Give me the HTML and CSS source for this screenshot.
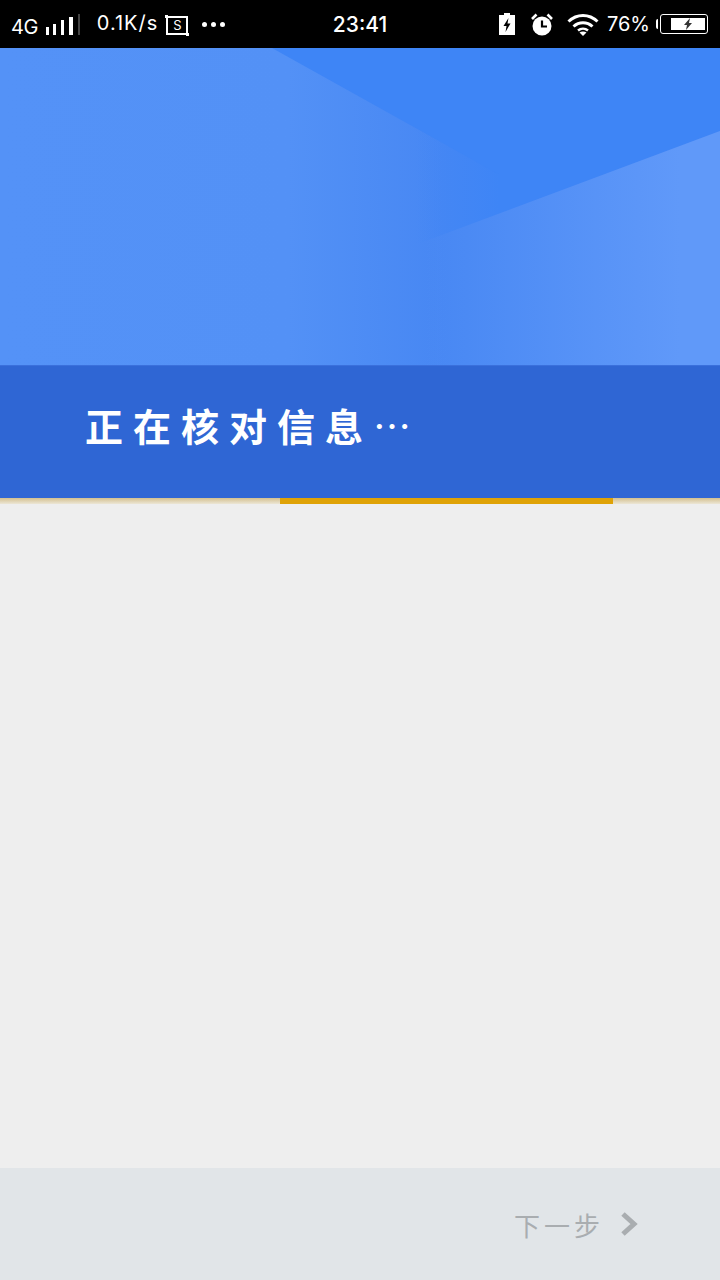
FILE: index.html
```html
<!DOCTYPE html>
<html lang="zh-CN">
<head>
    <meta charset="UTF-8">
    <meta name="viewport" content="width=device-width, initial-scale=1.0">
    <title>正在核对信息</title>
    <link rel="stylesheet" href="styles.css">
</head>
<body>
    <div class="page">
        <div class="status-bar">
            <div class="status-left">
                <span class="net-type">4G</span>
                <svg class="signal" width="36" height="22" viewBox="0 0 36 22">
                    <rect x="1" y="13" width="3" height="8" fill="#fff"/>
                    <rect x="8" y="10" width="3" height="11" fill="#fff"/>
                    <rect x="16" y="6" width="3" height="15" fill="#fff"/>
                    <rect x="24" y="3" width="4" height="18" fill="#fff"/>
                    <rect x="33" y="0" width="2" height="21" fill="#444"/>
                </svg>
                <span class="net-speed">0.1K/s</span>
                <div class="shot-icon">
                    <span>S</span>
                </div>
                <div class="more-dots">
                    <i></i><i></i><i></i>
                </div>
            </div>
            <div class="clock">23:41</div>
            <div class="status-right">
                <svg width="16" height="22" viewBox="0 0 16 22">
                    <path d="M5 0h6v2h5v20H0V2h5z" fill="#fff"/>
                    <path d="M9.500 5 4.500 13h3l-1 6 5-8.500h-3z" fill="#000"/>
                </svg>
                <svg class="alarm" width="22" height="23" viewBox="0 0 22 23">
                    <circle cx="11" cy="13" r="9.500" fill="#fff"/>
                    <path d="M11 7.500v6h5" fill="none" stroke="#000" stroke-width="2.200"/>
                    <path d="M1 6 5.500 1.500M21 6l-4.500-4.500" stroke="#fff" stroke-width="2.600" fill="none"/>
                </svg>
                <svg class="wifi" width="32" height="24" viewBox="0 0 32 24">
                    <path d="M1.500 9.500C10 1.500 22 1.500 30.500 9.500" fill="none" stroke="#fff" stroke-width="3"/>
                    <path d="M6.500 14.500C12 9.500 20 9.500 25.500 14.500" fill="none" stroke="#fff" stroke-width="3"/>
                    <path d="M11 18.500c3-2.500 7-2.500 10 0" fill="none" stroke="#fff" stroke-width="2.500"/>
                    <path d="M12.500 20.500 16 24l3.500-3.500c-2-1.500-5-1.500-7 0z" fill="#fff"/>
                </svg>
                <span class="battery-level">76%</span>
                <div class="battery">
                    <div class="battery-nub"></div>
                    <div class="battery-body">
                        <div class="battery-fill">
                            <svg width="10" height="12" viewBox="0 0 10 12">
                                <path d="M7 0 1 7h3l-1 5 6-7H6z" fill="#333"/>
                            </svg>
                        </div>
                    </div>
                </div>
            </div>
        </div>

        <div class="hero">
            <svg class="hero-bg" width="720" height="317" viewBox="0 0 720 317">
                <defs>
                    <linearGradient id="baseFill" x1="0" y1="0" x2="1" y2="0">
                        <stop offset="0" stop-color="#5492f7"/>
                        <stop offset="0.4" stop-color="#5391f6"/>
                        <stop offset="0.62" stop-color="#4787f3"/>
                        <stop offset="1" stop-color="#4787f3"/>
                    </linearGradient>
                    <linearGradient id="darkFill" gradientUnits="userSpaceOnUse" x1="415" y1="0" x2="500" y2="0">
                        <stop offset="0" stop-color="#3e85f6" stop-opacity="0"/>
                        <stop offset="1" stop-color="#3e85f6"/>
                    </linearGradient>
                    <linearGradient id="lightFill" gradientUnits="userSpaceOnUse" x1="425" y1="0" x2="680" y2="0">
                        <stop offset="0" stop-color="#6099f9" stop-opacity="0"/>
                        <stop offset="1" stop-color="#6099f9"/>
                    </linearGradient>
                </defs>
                <rect width="720" height="317" fill="url(#baseFill)"/>
                <polygon points="415,0 720,0 720,83 415,197" fill="url(#darkFill)"/>
                <polygon points="272,0 500,0 500,127" fill="#3e85f6"/>
                <polygon points="720,83 720,317 385,317 415,197" fill="url(#lightFill)"/>
            </svg>
        </div>

        <div class="notice">
            <h1 class="notice-title">正在核对信息<span class="notice-dots">…</span></h1>
        </div>

        <div class="progress">
            <div class="progress-done"></div>
            <div class="progress-now"></div>
            <div class="progress-rest"></div>
        </div>

        <div class="content"></div>

        <div class="footer">
            <span class="next-label">下一步</span>
            <svg class="next-arrow" width="18" height="24" viewBox="0 0 18 24">
                <path d="M3 2 14 12 3 22" fill="none" stroke="#a9adb0" stroke-width="5"/>
            </svg>
        </div>
    </div>
</body>
</html>
```

FILE: styles.css
```css
* {
    box-sizing: border-box;
    margin: 0;
    padding: 0;
}

body, html {
    width: 720px;
    height: 1280px;
    overflow: hidden;
    background-color: #eeeeee;
    font-family: "Noto Sans CJK SC", "Noto Sans", sans-serif;
}

.page {
    width: 720px;
    height: 1280px;
    display: flex;
    flex-direction: column;
}

/* 状态栏 */
.status-bar {
    height: 48px;
    flex: none;
    display: grid;
    grid-template-columns: 1fr auto 1fr;
    align-items: center;
    padding: 0 12px;
    background-color: #000;
    color: #fff;
    font-family: Inter, "Liberation Sans", sans-serif;
}

.status-left {
    display: flex;
    align-items: center;
}

.net-type {
    font-size: 20px;
    letter-spacing: -0.5px;
    margin-top: 6px;
    margin-left: -1px;
}

.signal {
    margin-left: 7px;
    margin-top: 2px;
}

.net-speed {
    font-size: 20px;
    letter-spacing: 1px;
    margin-left: 16px;
    margin-top: -3px;
}

.shot-icon {
    position: relative;
    width: 22px;
    height: 19px;
    margin-left: 8px;
    margin-top: 2px;
    border: 2px solid #fff;
    font-size: 13px;
    line-height: 15px;
    text-align: center;
}

/* 截图图标的角标 */
.shot-icon::before,
.shot-icon::after {
    content: "";
    position: absolute;
    width: 3px;
    height: 3px;
    background-color: #fff;
}

.shot-icon::before {
    top: -3px;
    left: -3px;
}

.shot-icon::after {
    right: -3px;
    bottom: -3px;
}

.more-dots {
    display: flex;
    gap: 4px;
    margin-left: 14px;
}

.more-dots i {
    width: 5px;
    height: 5px;
    border-radius: 50%;
    background-color: #fff;
}

.clock {
    font-size: 21px;
    font-weight: 500;
}

.status-right {
    display: flex;
    align-items: center;
    justify-content: flex-end;
}

.alarm {
    margin-left: 16px;
}

.wifi {
    margin-left: 14px;
}

.battery-level {
    font-size: 20px;
    margin-left: 8px;
    margin-top: -1px;
}

.battery {
    display: flex;
    align-items: center;
    margin-left: 6px;
}

.battery-nub {
    width: 2px;
    height: 10px;
    margin-right: 2px;
    background-color: #fff;
    border-radius: 2px 0 0 2px;
}

.battery-body {
    width: 48px;
    height: 20px;
    padding: 3px 2px 3px 10px;
    border: 1.500px solid #fff;
    border-radius: 3px;
}

.battery-fill {
    height: 100%;
    display: flex;
    align-items: center;
    justify-content: center;
    background-color: #fff;
}

/* 顶部背景 */
.hero {
    height: 317px;
    flex: none;
    overflow: hidden;
}

.hero-bg {
    display: block;
}

.notice {
    height: 133px;
    flex: none;
    display: flex;
    align-items: center;
    padding: 0 0 16px 85px;
    background-color: #2f66d4;
    border-top: 1px solid #3a70dc;
}

.notice-title {
    color: #fff;
    font-size: 38px;
    font-weight: 700;
    letter-spacing: 10px;
    white-space: nowrap;
}

.notice-dots {
    font-family: "Noto Sans CJK SC", sans-serif;
    font-weight: 400;
    letter-spacing: 0;
}

.progress {
    height: 6px;
    flex: none;
    display: flex;
}

.progress-done {
    width: 280px;
    background: linear-gradient(#d3c08f, #ece6d6);
}

.progress-now {
    width: 333px;
    background-color: #dfa206;
}

.progress-rest {
    flex: 1;
    background: linear-gradient(#d3c08f, #ece6d6);
}

.content {
    flex: 1;
    background-color: #eeeeee;
}

/* 底部按钮 */
.footer {
    height: 112px;
    flex: none;
    display: flex;
    align-items: center;
    justify-content: flex-end;
    padding-right: 82px;
    background-color: #e1e5e8;
}

.next-label {
    color: #a9adb0;
    font-size: 26px;
    letter-spacing: 4px;
}

.next-arrow {
    margin-left: 16px;
}
```
